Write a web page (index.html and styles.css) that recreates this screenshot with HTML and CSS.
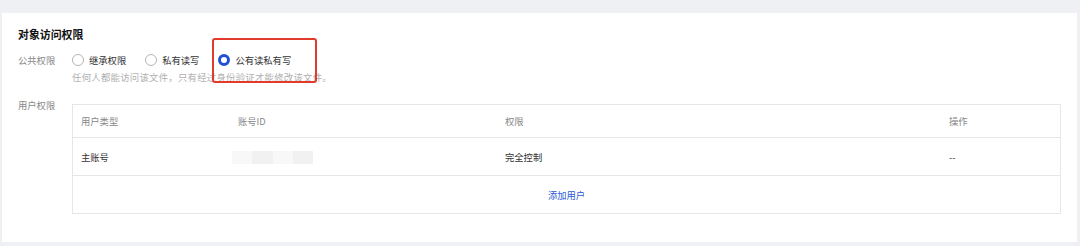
FILE: index.html
```html
<!DOCTYPE html>
<html lang="zh">
<head>
<meta charset="utf-8">
<link rel="stylesheet" href="styles.css">
</head>
<body>
<div class="card">
  <h2 class="title">对象访问权限</h2>
  <div class="field field-public">
    <div class="label">公共权限</div>
    <div class="content">
      <div class="radios">
        <label class="radio"><span class="dot"></span><span>继承权限</span></label>
        <label class="radio"><span class="dot"></span><span>私有读写</span></label>
        <label class="radio checked"><span class="dot"></span><span>公有读私有写</span></label>
        <span class="highlight"></span>
      </div>
      <div class="desc">任何人都能访问该文件，只有经过身份验证才能修改该文件。</div>
    </div>
  </div>
  <div class="field field-user">
    <div class="label">用户权限</div>
    <div class="table">
      <div class="row head">
        <div class="cell">用户类型</div>
        <div class="cell">账号ID</div>
        <div class="cell">权限</div>
        <div class="cell">操作</div>
      </div>
      <div class="row body">
        <div class="cell">主账号</div>
        <div class="cell"><span class="masked"><i></i><i class="d"></i><i></i><i class="d"></i></span></div>
        <div class="cell">完全控制</div>
        <div class="cell">--</div>
      </div>
      <div class="row add">
        <a class="link">添加用户</a>
      </div>
    </div>
  </div>
</div>
</body>
</html>
```

FILE: styles.css
```css
* { box-sizing: border-box; }
html, body { margin: 0; padding: 0; }
body {
  width: 1080px;
  height: 246px;
  background: #eff0f4;
  font-family: "PingFang SC", "Noto Sans CJK SC", "Liberation Sans", sans-serif;
  font-size: 9.3px;
  color: #333;
  padding: 13px 3px 0 2px;
  overflow: hidden;
}
.card {
  background: #fff;
  height: 229px;
  padding: 13px 16px 0 16px;
}
.title {
  margin: 0;
  font-size: 10.9px;
  font-weight: 700;
  color: #111;
  line-height: 16px;
}
.field {
  display: flex;
}
.label {
  width: 54px;
  flex: none;
  color: #888;
  line-height: 14px;
}
.field-public { margin-top: 11px; }
.radios {
  position: relative;
  display: flex;
  align-items: center;
  height: 14px;
}
.radio {
  display: flex;
  align-items: center;
  gap: 5px;
  margin-right: 19px;
  color: #333;
  line-height: 14px;
}
.dot {
  width: 12px;
  height: 12px;
  border-radius: 50%;
  border: 1px solid #b5b5b5;
  background: #fff;
}
.radio.checked .dot {
  border: 3.5px solid #1f50d6;
}
.highlight {
  position: absolute;
  left: 140px;
  top: -15px;
  width: 105px;
  height: 45px;
  border: 2px solid #e23b2e;
  border-radius: 3px;
}
.desc {
  color: #b0b0b0;
  font-size: 9.4px;
  letter-spacing: 0.25px;
  margin-top: 4px;
  line-height: 12px;
}
.field-user { margin-top: 21px; }
.field-user .label { margin-top: -6px; }
.table {
  width: 989px;
  border: 1px solid #e6e6e6;
}
.row {
  display: grid;
  grid-template-columns: 157px 267px 444px 1fr;
  align-items: center;
}
.row + .row { border-top: 1px solid #e6e6e6; }
.cell { padding-left: 8px; }
.head { height: 32px; color: #888; }
.body { height: 38px; color: #333; }
.add {
  height: 38px;
  display: flex;
  justify-content: center;
  align-items: center;
}
.link { color: #2a5ad8; }
.masked {
  display: flex;
  height: 13px;
  width: 81px;
  margin-left: -6px;
  margin-top: 2px;
}
.masked i {
  flex: 1;
  background: #f8f8f8;
}
.masked i.d { background: #f1f1f1; }
```
